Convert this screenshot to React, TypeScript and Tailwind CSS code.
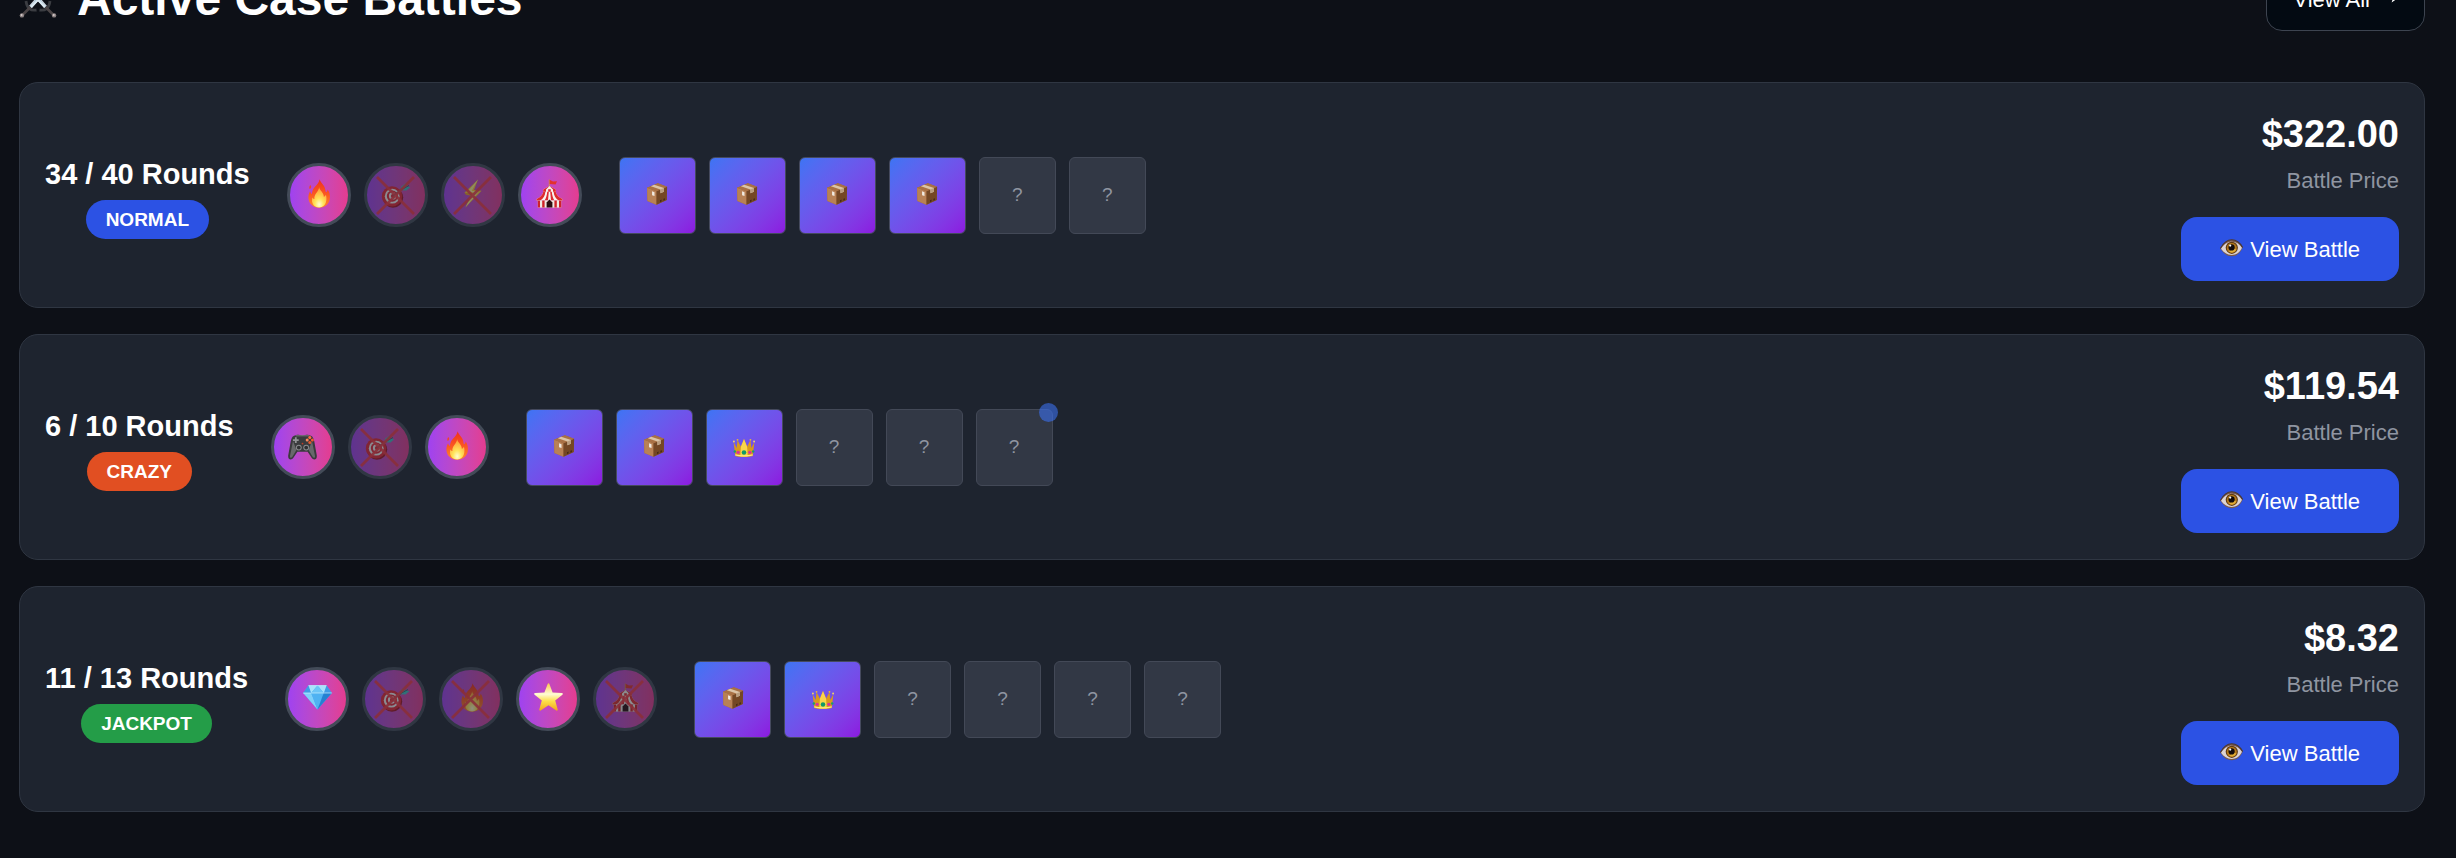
import type { ReactNode } from "react";

type EmojiName =
  | "fire"
  | "target"
  | "bolt"
  | "tent"
  | "gamepad"
  | "gem"
  | "star"
  | "package"
  | "crown";

const emojiArt: Record<EmojiName, ReactNode> = {
  fire: (
    <>
      <defs>
        <linearGradient id="fireOuter" x1="0" y1="0" x2="0" y2="1">
          <stop offset="0" stopColor="#f0301c" />
          <stop offset="0.55" stopColor="#fb5a22" />
          <stop offset="1" stopColor="#ff8a2a" />
        </linearGradient>
        <radialGradient id="fireInner" cx="0.5" cy="0.85" r="0.75">
          <stop offset="0" stopColor="#fffbd0" />
          <stop offset="0.4" stopColor="#ffe45a" />
          <stop offset="1" stopColor="#ffa23a" />
        </radialGradient>
      </defs>
      <path
        d="M15.5 0.3C16 3 20.5 6 21.3 10.5C21.6 12.3 21.6 13 22.2 13.2C23 12.8 23.6 11.5 23.6 10.4C25.6 13 26.4 16.5 25.8 20C24.9 25.3 20.8 28.7 15.2 28.7C9 28.7 4.6 24.5 4.4 18.8C4.3 15.8 5.3 13.8 6 12.2C6.6 13.6 7 14.6 7.8 15.1C8.6 11.5 8.8 10.2 11.2 7.6C13.2 5.4 15.2 3.4 15.5 0.3Z"
        fill="url(#fireOuter)"
      />
      <path
        d="M15.2 8.2C15.4 11.6 20 13.2 19.8 17.8C20.8 17.6 21.6 16.6 21.9 15.8C23.3 20.2 22.4 28.5 15.3 28.5C9 28.5 7 23 8.4 18.6C9.2 19.7 9.8 20 10.4 20.1C9.8 14.8 14.6 12.8 15.2 8.2Z"
        fill="url(#fireInner)"
      />
      <path d="M6.4 6C7.6 7.2 7.4 9.2 5.7 10C4.9 8.8 5.2 7.2 6.4 6Z" fill="#f0452a" />
    </>
  ),
  target: (
    <>
      <circle cx="12" cy="18.6" r="10.2" fill="#a01624" />
      <circle cx="11" cy="17.4" r="10.2" fill="#e32636" />
      <circle cx="11.2" cy="17.2" r="7.4" fill="#f6f1f3" />
      <circle cx="11.4" cy="17.1" r="5.6" fill="#e32636" />
      <circle cx="11.6" cy="17" r="3.7" fill="#f6f1f3" />
      <circle cx="11.8" cy="16.9" r="1.9" fill="#e32636" />
      <path d="M12 16.8L22.5 9.4" stroke="#4b7079" strokeWidth="1.5" />
      <path d="M19.5 11.2L20.2 7.5L25 4.2L25.2 7.4L29.5 8.2L25.4 11.4Z" fill="#43bdc0" />
      <path d="M20.5 10.6L28 6.5" stroke="#23747c" strokeWidth="1" />
    </>
  ),
  bolt: (
    <>
      <path d="M20 0.5L6.4 13.8L13.4 14.8L7.4 28.5L23.6 11.8L16 11Z" fill="#ffd02e" />
      <path d="M20 0.5L9.6 12.4L15.6 13.4L7.4 28.5L20.8 12.8L13.8 11.8Z" fill="#fff09a" />
      <path d="M6.4 13.8L13.4 14.8L12.6 16.6L8 15.8Z" fill="#f2a51e" />
    </>
  ),
  tent: (
    <>
      <path d="M14.3 8V0.6" stroke="#d0984a" strokeWidth="1" />
      <path d="M14.6 0.8L18 2.6L22 2.2L20.6 5.6L14.6 5Z" fill="#e2322c" />
      <path d="M14.5 7L20.8 10.4V13.6H8.2V10.4Z" fill="#f6f1ec" />
      <path d="M14.5 7L11 10.6V13.6H8.2V10.4ZM14.5 7L18 10.6V13.6H20.8V10.4Z" fill="#dc2b2f" />
      <path d="M13.2 10.2H15.8V13.6H13.2Z" fill="#dc2b2f" />
      <path d="M8.4 12.8H20.6C21.8 16.4 24 18.6 27.4 20V21.6H1.6V20C5 18.6 7.2 16.4 8.4 12.8Z" fill="#f8f4f0" />
      <path d="M8.4 12.8H10.4C10 16.6 8.6 19.4 5.4 21.6H1.6V20C5 18.6 7.2 16.4 8.4 12.8ZM12.2 12.8H13.8L13 21.6H9.6C11.2 18.8 12 16 12.2 12.8ZM15.2 12.8H16.8C17 16 17.8 18.8 19.4 21.6H16ZM18.6 12.8H20.6C21.8 16.4 24 18.6 27.4 20V21.6H23.6C20.4 19.4 19 16.6 18.6 12.8Z" fill="#dc2b2f" />
      <path d="M2.8 21.4H26.2V28.6H2.8Z" fill="#f1e9e2" />
      <path d="M2.8 21.4H5V28.6H2.8ZM7.2 21.4H9.6V28.6H7.2ZM19.4 21.4H21.8V28.6H19.4ZM24 21.4H26.2V28.6H24Z" fill="#cf2229" />
      <path d="M11.6 28.6V23.6L14.5 20.4L17.4 23.6V28.6Z" fill="#2a0d10" />
    </>
  ),
  gamepad: (
    <>
      <path
        d="M8 4.2C10 3.2 11.5 4.4 14.5 4.4S19 3.2 21 4.2C24 4.4 25.4 6.4 26.2 10L28.8 24.5C29.2 28.8 25.6 29.6 23.6 26.8L19.6 20.8H9.4L5.4 26.8C3.4 29.6 -0.2 28.8 0.2 24.5L2.8 10C3.6 6.4 5 4.4 8 4.2Z"
        fill="#3a3b3d"
      />
      <path d="M5 10L2 25C1.9 27.4 3.4 27.2 4.4 25.8L8.4 19ZM24 10L27 25C27.1 27.4 25.6 27.2 24.6 25.8L20.6 19Z" fill="#68696b" />
      <path d="M8 4.8H21" stroke="#77787a" strokeWidth="1" />
      <path d="M7.8 6.2V12M4.9 9.1H10.7" stroke="#929496" strokeWidth="1.8" />
      <circle cx="21.8" cy="6.4" r="1.5" fill="#ff6d3f" />
      <circle cx="21.8" cy="11.6" r="1.5" fill="#e4572e" />
      <circle cx="19.2" cy="9" r="1.5" fill="#ff8a5c" />
      <circle cx="24.4" cy="9" r="1.5" fill="#f4572e" />
      <circle cx="10.8" cy="16.6" r="2.9" fill="#8b8d8f" />
      <circle cx="10.8" cy="16.6" r="1.9" fill="#2f3032" />
      <circle cx="18.2" cy="16.6" r="2.9" fill="#8b8d8f" />
      <circle cx="18.2" cy="16.6" r="1.9" fill="#2f3032" />
      <circle cx="14.5" cy="12.6" r="0.9" fill="#c2412a" />
    </>
  ),
  gem: (
    <>
      <path d="M5.5 2.6H23.5L28.8 10L14.5 26.6L0.2 10Z" fill="#4aa9ee" />
      <path d="M5.5 2.6L0.2 10H8.2ZM23.5 2.6L28.8 10H20.8Z" fill="#3f9be6" />
      <path d="M5.5 2.6L8.2 10L14.5 2.6ZM23.5 2.6L20.8 10L14.5 2.6Z" fill="#a8e2fb" />
      <path d="M14.5 2.6L8.2 10H20.8Z" fill="#6cc5f7" />
      <path d="M0.2 10H8.2L14.5 26.6Z" fill="#7fd0fa" />
      <path d="M8.2 10H20.8L14.5 26.6Z" fill="#4fb2f2" />
      <path d="M20.8 10H28.8L14.5 26.6Z" fill="#2481d2" />
      <path d="M0.2 10H28.8M5.5 2.6H23.5" stroke="#c9efff" strokeWidth="0.7" />
    </>
  ),
  star: (
    <>
      <defs>
        <linearGradient id="starFill" x1="0" y1="0" x2="0" y2="1">
          <stop offset="0" stopColor="#fbc94a" />
          <stop offset="0.4" stopColor="#fffbd6" />
          <stop offset="0.65" stopColor="#fde04a" />
          <stop offset="1" stopColor="#f2a41c" />
        </linearGradient>
      </defs>
      <path
        d="M13.7 1C14.1 0 15 0 15.4 1L18.6 9.6L27.8 10C28.9 10.1 29.2 11 28.4 11.7L21.2 17.4L23.7 26.4C24 27.4 23.2 28 22.3 27.4L14.5 22.3L6.7 27.4C5.8 28 5 27.4 5.3 26.4L7.8 17.4L0.6 11.7C-0.2 11 0.1 10.1 1.2 10L10.4 9.6Z"
        fill="url(#starFill)"
      />
    </>
  ),
  package: (
    <>
      <path d="M1.4 6.2L15.6 0.4L27.8 4.8L27.4 22.4L13.8 28.8L1.8 23.8Z" fill="#9a643b" />
      <path d="M1.4 6.2L13.8 10.8V28.8L1.8 23.8Z" fill="#b88155" />
      <path d="M13.8 10.8L27.8 4.8L27.4 22.4L13.8 28.8Z" fill="#744724" />
      <path d="M1.4 6.2L15.6 0.4L27.8 4.8L13.8 10.8Z" fill="#a97145" />
      <path d="M6.4 4.2L10.8 2.4L23.8 6.5L23.6 11.4L19 13.4V8.6Z" fill="#dcc4a7" />
      <path d="M19 8.6L23.8 6.5L23.6 11.4L19 13.4Z" fill="#b99d7f" />
      <path d="M8 11L11.2 12.2V17.2L8 16Z" fill="#f1eae2" />
      <path d="M18.6 22.6L20.4 21.8V24.3L18.6 25.1ZM23 20.8L24.8 20V22.5L23 23.3Z" fill="#3f2613" />
    </>
  ),
  crown: (
    <>
      <path
        d="M0.8 9.2L4.8 17L6 6.6L10.4 15.4L14.5 5.4L18.6 15.4L23 6.6L24.2 17L28.2 9.2L26 27.6C20 29.4 9 29.4 3 27.6Z"
        fill="#d99a1c"
      />
      <path d="M14.5 5.4L18.6 15.4L19.4 28.4H9.6L10.4 15.4Z" fill="#fad54a" />
      <path d="M3 26.2C9 28 20 28 26 26.2" stroke="#ffe680" strokeWidth="1.4" fill="none" />
      <circle cx="1.2" cy="8.6" r="1.2" fill="#f7d660" />
      <circle cx="27.8" cy="8.6" r="1.2" fill="#f7d660" />
      <circle cx="6" cy="6.4" r="1.2" fill="#e8b83a" />
      <circle cx="23" cy="6.4" r="1.2" fill="#e8b83a" />
      <circle cx="14.5" cy="23" r="3" fill="#119a68" />
      <circle cx="6.8" cy="22.8" r="2.2" fill="#d8319c" />
      <circle cx="22.2" cy="22.8" r="2.2" fill="#d8319c" />
      <circle cx="2.4" cy="21.8" r="1.6" fill="#1aa06c" />
      <circle cx="26.6" cy="21.8" r="1.6" fill="#1aa06c" />
    </>
  ),
};

function Emoji({ name, className }: { name: EmojiName; className: string }) {
  return (
    <svg viewBox="0 0 29 29" className={className} aria-hidden="true">
      {emojiArt[name]}
    </svg>
  );
}

function SwordsIcon() {
  return (
    <svg viewBox="0 0 38 38" className="size-[38px] shrink-0" aria-hidden="true">
      <path d="M5 2L26.5 27M33 2L11.5 27" stroke="#c9d3dc" strokeWidth="3.6" />
      <path d="M5 2L26.5 27M33 2L11.5 27" stroke="#7fb4d4" strokeWidth="1" />
      <path d="M12 27L19 20L26 27" stroke="#dbe8f0" strokeWidth="2" fill="none" />
      <path d="M7 21C8 28.5 11.5 31 17.5 30M31 21C30 28.5 26.5 31 20.5 30" stroke="#3b3d42" strokeWidth="2.8" fill="none" />
      <path d="M11.5 27L3 35.5M26.5 27L35 35.5" stroke="#4a4446" strokeWidth="2.6" />
      <circle cx="2.9" cy="35.4" r="2.2" fill="#8d8384" />
      <circle cx="35.1" cy="35.4" r="2.2" fill="#8d8384" />
      <circle cx="2.6" cy="35" r="0.9" fill="#d6cccb" />
      <circle cx="34.8" cy="35" r="0.9" fill="#d6cccb" />
    </svg>
  );
}

function ArrowIcon() {
  return (
    <svg viewBox="0 0 22 12" className="mb-0.5 h-3 w-[22px] shrink-0" aria-hidden="true">
      <path d="M1 6H17" stroke="currentColor" strokeWidth="1.6" />
      <path d="M15.6 1.4L22 6L15.6 10.6L17 6Z" fill="currentColor" />
    </svg>
  );
}

function EyeIcon() {
  return (
    <svg viewBox="0 0 23 18" className="mb-0.5 h-[18px] w-[23px] shrink-0" aria-hidden="true">
      <path d="M0.3 9.6C3.5 3.6 7 0.8 11.8 0.8S20 3.6 22.7 8.6C20.4 14.4 16.4 17.2 11.6 17.2S3.4 14.6 0.3 9.6Z" fill="#7b5a4c" />
      <path d="M1 9.8C4 5 7.4 2.8 11.8 2.8S19.4 5 22 8.8C19.6 13.8 16 16 11.6 16S4 13.8 1 9.8Z" fill="#dcd3d4" />
      <circle cx="11.8" cy="8.8" r="6.1" fill="#5e3a12" />
      <circle cx="11.8" cy="9" r="5" fill="#b57a1c" />
      <path d="M9 12.6A5 5 0 0 0 16.4 10.6L13.4 9.6Z" fill="#e3ae36" />
      <circle cx="11.6" cy="8.4" r="3.1" fill="#120b0c" />
      <circle cx="10.2" cy="6.6" r="1.1" fill="#fff" />
      <path d="M0.3 9.6C3.5 3.6 7 0.8 11.8 0.8S20 3.6 22.7 8.6" stroke="#4b3631" strokeWidth="1.1" fill="none" />
    </svg>
  );
}

type Player = { emoji: EmojiName; out?: boolean };

type Battle = {
  rounds: string;
  mode: "NORMAL" | "CRAZY" | "JACKPOT";
  players: Player[];
  opened: EmojiName[];
  hidden: number;
  live?: boolean;
  price: string;
};

const battles: Battle[] = [
  {
    rounds: "34 / 40 Rounds",
    mode: "NORMAL",
    players: [{ emoji: "fire" }, { emoji: "target", out: true }, { emoji: "bolt", out: true }, { emoji: "tent" }],
    opened: ["package", "package", "package", "package"],
    hidden: 2,
    price: "$322.00",
  },
  {
    rounds: "6 / 10 Rounds",
    mode: "CRAZY",
    players: [{ emoji: "gamepad" }, { emoji: "target", out: true }, { emoji: "fire" }],
    opened: ["package", "package", "crown"],
    hidden: 3,
    live: true,
    price: "$119.54",
  },
  {
    rounds: "11 / 13 Rounds",
    mode: "JACKPOT",
    players: [
      { emoji: "gem" },
      { emoji: "target", out: true },
      { emoji: "fire", out: true },
      { emoji: "star" },
      { emoji: "tent", out: true },
    ],
    opened: ["package", "crown"],
    hidden: 4,
    price: "$8.32",
  },
];

const modeColor: Record<Battle["mode"], string> = {
  NORMAL: "bg-[#2c52e4]",
  CRAZY: "bg-[#e14f22]",
  JACKPOT: "bg-[#249d48]",
};

function Avatar({ emoji, out }: Player) {
  return (
    <li
      className={`relative flex size-16 items-center justify-center rounded-full border-3 border-[#434b58] bg-linear-to-r from-[#9c40f5] to-[#e8398a] bg-origin-border ${
        out ? "opacity-50" : ""
      }`}
    >
      <Emoji name={emoji} className="mb-1 size-[29px]" />
      {out && (
        <svg viewBox="0 0 58 58" className="absolute inset-0 size-full" aria-hidden="true">
          <path d="M10 11L47 48M47 11L10 48" stroke="#f43a44" strokeOpacity="0.9" strokeWidth="2.8" />
        </svg>
      )}
    </li>
  );
}

function HiddenCase({ live }: { live: boolean }) {
  return (
    <li className="relative flex size-[77px] items-center justify-center rounded-md border border-[#434957] bg-[#323845] text-[19px] text-[#8f95a1]">
      ?
      {live && <span className="absolute -top-[7px] -right-[6px] size-[19px] rounded-full bg-[#3b70ee]/60" />}
    </li>
  );
}

function BattleCard({ battle }: { battle: Battle }) {
  return (
    <article className="flex items-center justify-between rounded-[19px] border border-[#2f3642] bg-[#1e242f] px-[25px] py-[26px]">
      <div className="flex items-center gap-[37px]">
        <div className="flex flex-col items-center gap-[3px]">
          <h2 className="text-[29px] leading-[45px] font-bold">{battle.rounds}</h2>
          <span className={`rounded-full px-5 text-[19px] leading-[39px] font-bold ${modeColor[battle.mode]}`}>
            {battle.mode}
          </span>
        </div>
        <ul className="flex gap-[13px]">
          {battle.players.map((player, i) => (
            <Avatar key={i} {...player} />
          ))}
        </ul>
        <ul className="flex gap-[13px]">
          {battle.opened.map((name, i) => (
            <li
              key={i}
              className="flex size-[77px] items-center justify-center rounded-md border border-[#454a5e] bg-linear-to-br from-[#3c74f4] to-[#8c18e0]"
            >
              <Emoji name={name} className="mb-[3px] size-[22px]" />
            </li>
          ))}
          {Array.from({ length: battle.hidden }, (_, i) => (
            <HiddenCase key={i} live={Boolean(battle.live) && i === battle.hidden - 1} />
          ))}
        </ul>
      </div>
      <div className="flex flex-col items-end">
        <p className="text-[38px] leading-[51px] font-bold">{battle.price}</p>
        <p className="mt-[5px] text-[22px] leading-8 text-[#8f95a1]">Battle Price</p>
        <button
          type="button"
          className="mt-5 flex h-16 items-center gap-[7px] rounded-2xl bg-[#2c52e4] px-[39px] text-[22px]"
        >
          <EyeIcon />
          View Battle
        </button>
      </div>
    </article>
  );
}

export default function App() {
  return (
    <main className="min-h-screen overflow-hidden bg-[#0d1017] pr-[31px] pb-12 pl-[19px] font-['Liberation_Sans',Arial,sans-serif] text-white">
      <header className="-mt-[33px] flex h-16 items-center justify-between">
        <h1 className="flex items-center gap-5 text-[48px] leading-[58px] font-bold">
          <SwordsIcon />
          Active Case Battles
        </h1>
        <a
          href="#all-battles"
          className="flex h-16 items-center gap-[6px] rounded-2xl border border-[#3d4450] bg-[#030a12] px-[26px] text-[22px]"
        >
          View All
          <ArrowIcon />
        </a>
      </header>
      <section className="mt-[51px] flex flex-col gap-[26px]">
        {battles.map((battle) => (
          <BattleCard key={battle.rounds} battle={battle} />
        ))}
      </section>
    </main>
  );
}
